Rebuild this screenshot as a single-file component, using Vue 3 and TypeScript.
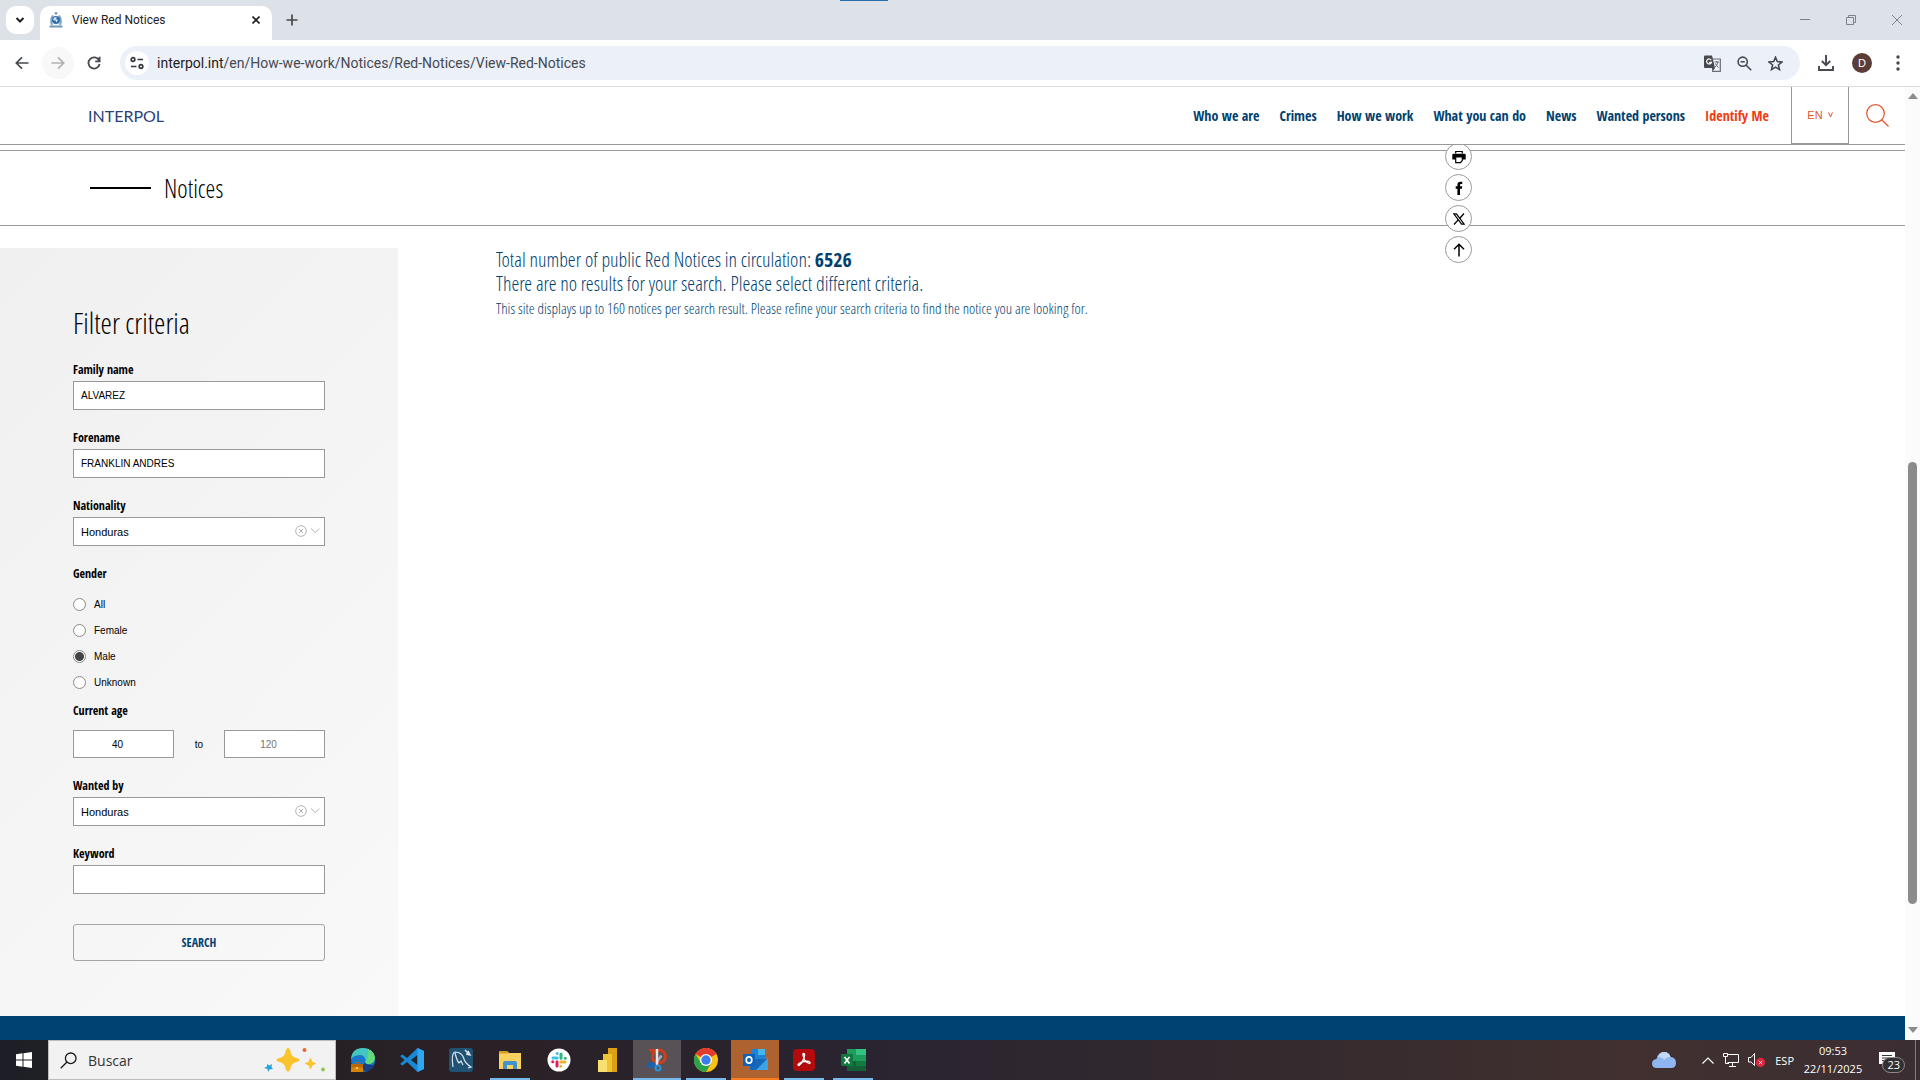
<script setup lang="ts">
import { ref } from 'vue'

interface NavItem {
  label: string
  accent?: boolean
}

const navItems: NavItem[] = [
  { label: 'Who we are' },
  { label: 'Crimes' },
  { label: 'How we work' },
  { label: 'What you can do' },
  { label: 'News' },
  { label: 'Wanted persons' },
  { label: 'Identify Me', accent: true },
]

const genders: string[] = ['All', 'Female', 'Male', 'Unknown']

const familyName = ref<string>('ALVAREZ')
const forename = ref<string>('FRANKLIN ANDRES')
const nationality = ref<string>('Honduras')
const gender = ref<string>('Male')
const ageMin = ref<string>('40')
const ageMax = ref<string>('')
const wantedBy = ref<string>('Honduras')
const keyword = ref<string>('')
const total = ref<number>(6526)
</script>

<template>
  <div class="screen">
    <div class="tabstrip">
      <button class="tab-search" aria-label="Search tabs">
        <svg width="10" height="10" viewBox="0 0 10 10"><path d="M1.5 3l3.500 3.500L8.500 3" fill="none" stroke="#1f2023" stroke-width="2" /></svg>
      </button>
      <div class="tab">
        <svg class="favicon" width="16" height="16" viewBox="0 0 16 16">
          <path d="M8 0v3M6.500 1.200h3" stroke="#5c88b4" stroke-width="1" />
          <path d="M5 3.500Q2 8 4 13M11 3.500Q14 8 12 13" fill="none" stroke="#7ea2c4" stroke-width="2" />
          <circle cx="8" cy="8" r="4" fill="#2d6ca8" />
          <path d="M6 5.500l3-.5-1 2 2 1-1.500 2.500-1-2L5 8z" fill="#d5e4f2" />
          <path d="M1.500 13.500h13v2h-13z" fill="#6f96bb" />
        </svg>
        <span class="tab-title">View Red Notices</span>
        <button class="icon-btn" aria-label="Close tab">
          <svg width="8" height="8" viewBox="0 0 8 8"><path d="M.5.5l7 7M7.500.5l-7 7" stroke="#1f2023" stroke-width="1.600" /></svg>
        </button>
      </div>
      <button class="icon-btn new-tab" aria-label="New tab">
        <svg width="12" height="12" viewBox="0 0 12 12"><path d="M6 .5v11M.5 6h11" stroke="#44474c" stroke-width="1.700" /></svg>
      </button>
      <div class="loader"></div>
      <div class="window-controls">
        <button class="icon-btn" aria-label="Minimize"><svg width="10" height="10" viewBox="0 0 10 10"><path d="M0 4.500h10" stroke="#7e828a" /></svg></button>
        <button class="icon-btn" aria-label="Restore"><svg width="10" height="10" viewBox="0 0 10 10"><path d="M.5 2.500h7v7h-7zM2.500 2.500v-2h7v7h-2" fill="none" stroke="#7e828a" /></svg></button>
        <button class="icon-btn" aria-label="Close"><svg width="10" height="10" viewBox="0 0 10 10"><path d="M0 0l10 10M10 0L0 10" stroke="#7e828a" /></svg></button>
      </div>
    </div>

    <div class="toolbar">
      <button class="tool" aria-label="Back"><svg width="14" height="14" viewBox="0 0 14 14"><path d="M13.500 7H1.500M7 1.300L1.300 7 7 12.700" fill="none" stroke="#46494e" stroke-width="1.700" /></svg></button>
      <button class="tool tool-off" aria-label="Forward"><svg width="14" height="14" viewBox="0 0 14 14"><path d="M.5 7h12M7 1.300L12.700 7 7 12.700" fill="none" stroke="#b0b1b3" stroke-width="1.700" /></svg></button>
      <button class="tool" aria-label="Reload"><svg width="14" height="14" viewBox="0 0 14 14"><path d="M12 4.200A5.600 5.600 0 1 0 12.600 8M12.600.8v4.500H8.200" fill="none" stroke="#46494e" stroke-width="1.800" /></svg></button>
      <div class="omnibox">
        <button class="site-info" aria-label="Site information">
          <svg width="14" height="14" viewBox="0 0 14 14"><g fill="none" stroke="#34373b" stroke-width="1.700"><circle cx="3" cy="3.500" r="1.800" /><path d="M7.500 3.500H13M1 10.500h5.500" /><circle cx="11" cy="10.500" r="1.800" /></g></svg>
        </button>
        <span class="url"><span class="host">interpol.int</span>/en/How-we-work/Notices/Red-Notices/View-Red-Notices</span>
        <button class="icon-btn" aria-label="Translate">
          <svg width="17" height="17" viewBox="0 0 17 17"><path d="M6 4h10.300v12.300H8" fill="none" stroke="#6b6e73" stroke-width="1.200" /><path d="M1 .5h7l3 12.500H1q-1 0-1-1V1.500Q0 .5 1 .5z" fill="#46494e" /><path d="M8 13l3 0-2.500 3.500z" fill="#46494e" /><path d="M7.300 5.200A2.500 2.500 0 1 0 7.500 7.300H5.200" fill="none" stroke="#fff" stroke-width="1.200" /><path d="M10.500 7h4.500M12.700 6v1M14 7q-.5 3-3 5M11.500 8.500q1 2.500 3 4" fill="none" stroke="#6b6e73" /></svg>
        </button>
        <button class="icon-btn" aria-label="Zoom">
          <svg width="15" height="15" viewBox="0 0 15 15"><g fill="none" stroke="#46494e" stroke-width="1.600"><circle cx="5.700" cy="5.700" r="4.600" /><path d="M9 9l5.200 5.200M3.600 5.700h4.200" /></g></svg>
        </button>
        <button class="icon-btn" aria-label="Bookmark">
          <svg width="15" height="15" viewBox="0 0 15 15"><path d="M7.500 1.300l1.800 4.300 4.700.4-3.600 3 1.100 4.600-4-2.500-4 2.500 1.100-4.600L1 6l4.700-.4z" fill="none" stroke="#46494e" stroke-width="1.600" /></svg>
        </button>
      </div>
      <div class="toolbar-end">
        <button class="icon-btn" aria-label="Downloads"><svg width="16" height="16" viewBox="0 0 16 16"><path d="M8 0v10M3.800 6L8 10.200 12.200 6M1 11v4h14v-4" fill="none" stroke="#46494e" stroke-width="1.900" /></svg></button>
        <button class="avatar" aria-label="Profile">D</button>
        <button class="icon-btn" aria-label="Menu"><svg width="4" height="16" viewBox="0 0 4 16"><g fill="#46494e"><circle cx="2" cy="2" r="1.700" /><circle cx="2" cy="8" r="1.700" /><circle cx="2" cy="14" r="1.700" /></g></svg></button>
      </div>
    </div>

    <div class="viewport">
      <div class="page">
        <header class="site-header">
          <a class="logo" href="#">INTERPOL</a>
          <nav class="nav">
            <a v-for="item in navItems" :key="item.label" href="#" :class="{ accent: item.accent }">{{ item.label }}</a>
          </nav>
          <button class="lang">EN <svg width="5" height="6" viewBox="0 0 5 6"><path d="M.5.5l2 4.500 2-4.500" fill="none" stroke="#e0562b" /></svg></button>
          <button class="icon-btn site-search" aria-label="Search">
            <svg width="23" height="23" viewBox="0 0 23 23"><g fill="none" stroke="#e0562b" stroke-width="1.200"><circle cx="9.500" cy="9.500" r="8.800" /><path d="M15.500 15.500l7 7" /></g></svg>
          </button>
        </header>

        <div class="section-bar">
          <span class="dash"></span>
          <h2>Notices</h2>
          <div class="share">
            <button aria-label="Print"><svg width="14" height="14" viewBox="0 0 14 14"><path d="M3.700 3.500v-2h6.600v2" fill="none" stroke="#000" stroke-width="1.200" /><path d="M1.500 3.700h11q1.200 0 1.200 1.200V9.500H.3V4.900q0-1.200 1.200-1.200z" /><path d="M3.700 7h6.600v3.500L8.500 12.600H3.700z" fill="#fff" stroke="#000" stroke-width="1.200" /></svg></button>
            <button aria-label="Facebook"><svg width="14" height="14" viewBox="0 0 14 14"><path d="M5.400 14V7.700H3.700V5.200h1.700V3.700Q5.400.7 8.400.7h1.800v2.400H9q-1 0-1 1v1.100h2.200l-.3 2.500H8V14z" /></svg></button>
            <button aria-label="X"><svg width="12" height="12" viewBox="0 0 12 12"><path d="M.8.8h2.600l7.800 10.400H8.600z" fill="#fff" stroke="#000" stroke-width="1.200" /><path d="M11 .5L6.800 5.200M5.200 6.900L1 11.500" stroke="#000" stroke-width="1.300" /></svg></button>
            <button aria-label="Back to top"><svg width="14" height="14" viewBox="0 0 14 14"><path d="M7 13.500V1.500M2 6.300l5-5 5 5" fill="none" stroke="#000" stroke-width="1.500" /></svg></button>
          </div>
        </div>

        <main class="content">
          <form class="filters" @submit.prevent>
            <h1>Filter criteria</h1>
            <div class="field">
              <label for="family">Family name</label>
              <input id="family" v-model="familyName" type="text" />
            </div>
            <div class="field">
              <label for="forename">Forename</label>
              <input id="forename" v-model="forename" type="text" />
            </div>
            <div class="field">
              <label for="nationality">Nationality</label>
              <div class="select">
                <select id="nationality" v-model="nationality"><option>Honduras</option></select>
                <svg class="select-icons" width="26" height="12" viewBox="0 0 26 12"><g fill="none" stroke="#b4b4b4"><circle cx="6" cy="6" r="5.300" /><path d="M4 4l4 4M8 4L4 8M16 3.500l4.200 4 4.200-4" /></g></svg>
              </div>
            </div>
            <fieldset>
              <legend>Gender</legend>
              <label v-for="g in genders" :key="g" class="radio">
                <input v-model="gender" type="radio" name="gender" :value="g" />{{ g }}
              </label>
            </fieldset>
            <div class="field age">
              <label for="age-min">Current age</label>
              <div class="range">
                <input id="age-min" v-model="ageMin" type="text" inputmode="numeric" />
                <label for="age-max" class="to">to</label>
                <input id="age-max" v-model="ageMax" type="text" inputmode="numeric" placeholder="120" />
              </div>
            </div>
            <div class="field">
              <label for="wanted">Wanted by</label>
              <div class="select">
                <select id="wanted" v-model="wantedBy"><option>Honduras</option></select>
                <svg class="select-icons" width="26" height="12" viewBox="0 0 26 12"><g fill="none" stroke="#b4b4b4"><circle cx="6" cy="6" r="5.300" /><path d="M4 4l4 4M8 4L4 8M16 3.500l4.200 4 4.200-4" /></g></svg>
              </div>
            </div>
            <div class="field">
              <label for="keyword">Keyword</label>
              <input id="keyword" v-model="keyword" type="text" />
            </div>
            <button class="submit" type="submit">SEARCH</button>
          </form>

          <section class="results">
            <p>Total number of public Red Notices in circulation: <strong>{{ total }}</strong></p>
            <p>There are no results for your search. Please select different criteria.</p>
            <p class="hint">This site displays up to 160 notices per search result. Please refine your search criteria to find the notice you are looking for.</p>
          </section>
        </main>
        <footer class="site-footer"></footer>
      </div>
      <div class="scrollbar">
        <svg width="10" height="6" viewBox="0 0 10 6"><path d="M0 6l5-6 5 6z" fill="#8b8b8b" /></svg>
        <div class="track"><div class="thumb"></div></div>
        <svg width="10" height="6" viewBox="0 0 10 6"><path d="M0 0l5 6 5-6z" fill="#8b8b8b" /></svg>
      </div>
    </div>

    <div class="taskbar">
      <button class="start" aria-label="Start"><svg width="16" height="16" viewBox="0 0 16 16"><path d="M0 2.200L6.500 1.300v6.200H0zM7.500 1.200L16 0v7.500H7.500zM0 8.500h6.500v6.200L0 13.800zM7.500 8.500H16V16l-8.500-1.200z" fill="#fff" /></svg></button>
      <label class="finder">
        <svg width="17" height="17" viewBox="0 0 17 17"><g fill="none" stroke="#1b1b1b" stroke-width="1.300"><circle cx="10.700" cy="6.300" r="5.300" /><path d="M7 10L.7 16.300" /></g></svg>
        <input type="text" placeholder="Buscar" aria-label="Buscar" />
        <svg width="62" height="26" viewBox="0 0 62 26">
          <path d="M24 1q2 0 3 5.500 1 3 4 4 4.500 1 4.500 2.500T31 15.500q-3 1-4 4Q26 24.500 24 24.500t-3-5q-1-3-4-4-4.500-1-4.500-2.500t4.500-2.500q3-1 4-4Q22 1 24 1z" fill="#fcc42c" />
          <path d="M46.500 11q1 0 1.500 3 .5 1 2.500 1.500 1.500.3 1.500 1t-1.500 1Q48.500 18 48 19q-.5 3-1.500 3T45 19q-.5-1-2.500-1.500-1.500-.3-1.500-1t1.500-1Q44.500 15 45 14q.5-3 1.500-3z" fill="#fcc42c" />
          <path d="M3 17l2.500 1.500L8 17l-.5 3 1.500 2-3 .3L4 25l-.5-3L0 21l3-1.500z" fill="#2aa4de" />
          <circle cx="40.500" cy="3" r="2" fill="#e8683c" /><circle cx="59" cy="22.500" r="2" fill="#8fc65b" />
        </svg>
      </label>
      <div class="apps">
        <button aria-label="Edge"><svg width="24" height="24" viewBox="0 0 24 24"><circle cx="12" cy="12" r="12" fill="#1976c9" /><path d="M0 11Q1 0 12 0q11 .5 12 10-1 6-7 6-4-1-2.500-4Q14 8 10 7 3 7 0 11z" fill="#43c6c0" /><path d="M17 1q6 3 7 9-1 6-7 6-2 0-2.500-1 4-6 2.500-14z" fill="#65da78" /><path d="M14 15q4 3 9 1.500-3 6-8 7.500-7-5-1-9z" fill="#173f85" /><path d="M0 16h12v8H0z" fill="#d58309" /><path d="M0 16h12v3.500H0z" fill="#b96806" /><path d="M4 14.500h4V16" fill="none" stroke="#b96806" /><path d="M5 19h2v2H5z" fill="#ffd366" /></svg></button>
        <button aria-label="Visual Studio Code"><svg width="24" height="24" viewBox="0 0 24 24"><path d="M17.500 0L24 3v18l-6.500 3L7 14l-4.500 3.500L0 16l4.500-4L0 8l2.500-1.500L7 10z" fill="#1789d6" /><path d="M17.500 7v10L11 12z" fill="#262229" /><path d="M17.500 0L24 3v18l-6.500 3z" fill="#30a7f2" /></svg></button>
        <button aria-label="MySQL Workbench"><svg width="24" height="24" viewBox="0 0 24 24"><rect width="24" height="24" rx="3" fill="#215274" /><path d="M4 19Q2 5 6 4q7 0 9 7 1 4 7 8l-3 1M6 5q2 8 4 10l2-2 2 4" fill="none" stroke="#d5e4ee" stroke-width="1.200" /><path d="M16 2l5 5M19 3l2 4-4-1" fill="none" stroke="#d5e4ee" stroke-width="1.500" /></svg></button>
        <button class="open" aria-label="File Explorer"><svg width="22" height="20" viewBox="0 0 22 20"><path d="M0 1h8l2 2h12v16H0z" fill="#fbd15f" /><path d="M0 1h8l1.500 2.500H0z" fill="#d89b1e" /><path d="M4 19v-6q0-2 2-2h10q2 0 2 2v6h-4v-4H8v4z" fill="#3f94cf" /></svg></button>
        <button aria-label="Slack"><svg width="24" height="24" viewBox="0 0 24 24"><circle cx="12" cy="12" r="11.500" fill="#fff" /><g fill="none" stroke-width="3" stroke-linecap="round"><path d="M10.200 5.500v.1M6 10h4.200" stroke="#36c5f0" /><path d="M14 6v4.200M18.300 10.200h-.1" stroke="#2eb67d" /><path d="M13.800 14H18M13.800 18.300v-.1" stroke="#ecb22e" /><path d="M10 13.800V18M5.700 13.800h.1" stroke="#e01e5a" /></g></svg></button>
        <button aria-label="Power BI"><svg width="20" height="24" viewBox="0 0 20 24"><path d="M10 0h9v24h-9z" fill="#dca017" /><path d="M5 6h9v18H5z" fill="#efc431" /><path d="M0 12h9v12H0z" fill="#f8df6e" /></svg></button>
        <button class="open active" aria-label="Snipping Tool"><svg width="22" height="24" viewBox="0 0 22 24"><ellipse cx="13" cy="8.500" rx="6.500" ry="6.500" fill="none" stroke="#c8401f" stroke-width="3" /><path d="M2 1h8L7 6z" fill="#c8401f" /><path d="M15.500 7.500l-5 7" stroke="#a9aeb3" stroke-width="2.500" /><path d="M11 1v16" stroke="#e4e7e9" stroke-width="2.500" /><ellipse cx="5" cy="17" rx="4.500" ry="3" fill="#1f61a8" /><circle cx="12" cy="20" r="2.500" fill="none" stroke="#2a90d8" stroke-width="2.200" /></svg></button>
        <button class="open" aria-label="Chrome"><svg width="24" height="24" viewBox="0 0 24 24"><circle cx="12" cy="12" r="12" fill="#fbc116" /><path d="M12 12L1.600 6A12 12 0 0 1 22.400 6z" fill="#e33b2e" /><path d="M12 12v0L6.800 15 1.600 6A12 12 0 0 0 12 24l5.200-9z" fill="#2ba24c" /><circle cx="12" cy="12" r="6" fill="#fff" /><circle cx="12" cy="12" r="4.700" fill="#3b7ded" /></svg></button>
        <button class="open alert" aria-label="Outlook"><svg width="25" height="24" viewBox="0 0 25 24"><path d="M8 1h14v14H8z" fill="#1d83d4" /><path d="M15 1h7v6h-7z" fill="#45b5ef" /><path d="M7 11h18v11H7z" fill="#1769b8" /><path d="M25 10v12H13z" fill="#3ba4e8" /><rect y="6" width="12" height="12" rx="1" fill="#0e62bb" /><ellipse cx="6" cy="12" rx="2.800" ry="3.200" fill="none" stroke="#fff" stroke-width="1.700" /></svg></button>
        <button class="open" aria-label="Acrobat"><svg width="22" height="22" viewBox="0 0 22 22"><rect width="22" height="22" rx="4" fill="#b30b0b" /><path d="M10.500 4.500q2 0 .5 4.500-1.500 5-5 7.500-2 0 0-2 4-3 10-2 2.500 1.500 0 2Q11 13 10 6q-.3-1.500.5-1.500z" fill="none" stroke="#fff" stroke-width="1.300" /></svg></button>
        <button class="open" aria-label="Excel"><svg width="25" height="22" viewBox="0 0 25 22"><path d="M6 0h19v22H6z" fill="#1d9c5b" /><path d="M15 0h10v6H15z" fill="#33c481" /><path d="M6 12h19v10H6z" fill="#165f38" /><path d="M15 12h10v5H15z" fill="#107c41" /><rect y="5" width="12" height="12" rx="1" fill="#0f7a40" /><path d="M3.500 8l5 6.500M8.500 8l-5 6.500" stroke="#fff" stroke-width="1.700" /></svg></button>
      </div>
      <div class="tray">
        <svg class="cloud" width="24" height="16" viewBox="0 0 24 16"><path d="M5 16Q0 16 0 11.500 0 7.500 4.500 7 6 0 12 0q5 0 6.500 5Q24 5.500 24 11q0 5-5 5z" fill="#8fb6f0" /><path d="M6 5q2-5 6-5 5 0 6.500 5-5 0-6 3Q10 4.500 6 5z" fill="#c3d8f7" /></svg>
        <svg class="caret" width="12" height="7" viewBox="0 0 12 7"><path d="M.5 6.500L6 1l5.500 5.500" fill="none" stroke="#fff" stroke-width="1.200" /></svg>
        <svg width="16" height="14" viewBox="0 0 16 14"><path d="M4.500 1.500h11v8h-11M9.500 10v3M6 13.500h7M.5.5h4v3h-4zM2.500 4v6.500H6" fill="none" stroke="#fff" /></svg>
        <svg width="18" height="16" viewBox="0 0 18 16"><path d="M.5 5.500H3l3.500-4v12L3 10H.5z" fill="none" stroke="#fff" /><circle cx="12.500" cy="10.500" r="4.700" fill="#d9263c" /><path d="M10.800 8.800l3.400 3.400M14.200 8.800l-3.400 3.400" stroke="#fff" /></svg>
        <span class="ime">ESP</span>
        <time class="clock"><span>09:53</span><span>22/11/2025</span></time>
        <button class="notify" aria-label="Notifications">
          <svg width="16" height="16" viewBox="0 0 16 16"><path d="M0 0h16v12H7l-3 3.500V12H0z" fill="#fff" /><path d="M3 3.500h10M3 6h10M3 8.500h6" stroke="#3d3033" /></svg>
          <span class="badge">23</span>
        </button>
      </div>
    </div>
  </div>
</template>

<style>
body {
  margin: 0;
  background: #fff;
}
</style>

<style scoped>
.screen {
  --cond: "Open Sans Condensed", "Liberation Sans Narrow", "Open Sans", sans-serif;
  --cond-light: "Open Sans Condensed Light", "Open Sans Condensed", "Liberation Sans Narrow", sans-serif;
  --line: #999;
  --blue: #00416f;
  display: flex;
  flex-direction: column;
  min-height: 100vh;
  font-family: "Liberation Sans", Arial, sans-serif;
  font-size: 11px;
  color: #000;
}
.screen * {
  box-sizing: border-box;
}
button {
  padding: 0;
  border: 0;
  background: none;
  font: inherit;
  color: inherit;
}
svg {
  display: block;
  flex: none;
}
a {
  text-decoration: none;
}
h1, h2, p {
  margin: 0;
  font-weight: 300;
}
.icon-btn {
  display: flex;
  align-items: center;
  justify-content: center;
}

/* browser frame */
.tabstrip {
  position: relative;
  display: flex;
  align-items: flex-start;
  height: 40px;
  padding: 6px 18px 0 6px;
  background: #dde1e8;
}
.tab-search {
  display: flex;
  align-items: center;
  justify-content: center;
  width: 28px;
  height: 28px;
  margin-right: 6px;
  border-radius: 10px;
  background: #fff;
}
.tab {
  display: flex;
  align-items: center;
  gap: 8px;
  width: 232px;
  height: 34px;
  padding: 0 12px 6px 8px;
  border-radius: 10px 10px 0 0;
  background: #fff;
}
.tab-title {
  flex: 1;
  font-family: Roboto, sans-serif;
  font-size: 12px;
  color: #1f2023;
}
.new-tab {
  height: 28px;
  margin-left: 14px;
}
.loader {
  position: absolute;
  top: 0;
  left: 840px;
  width: 48px;
  height: 1px;
  background: #2c6da8;
}
.window-controls {
  display: flex;
  gap: 36px;
  height: 28px;
  margin-left: auto;
}
.toolbar {
  display: flex;
  align-items: center;
  height: 47px;
  padding: 0 20px 0 6px;
  border-bottom: 1px solid #dcdcdc;
  background: #fff;
}
.tool {
  display: flex;
  align-items: center;
  justify-content: center;
  width: 32px;
  height: 32px;
  margin-right: 4px;
  border-radius: 16px;
}
.tool-off {
  background: #f8f8f8;
}
.omnibox {
  display: flex;
  flex: 1;
  align-items: center;
  gap: 16px;
  height: 34px;
  margin-left: 6px;
  padding: 0 17px 0 5px;
  border-radius: 17px;
  background: #ebf0f9;
}
.site-info {
  display: flex;
  align-items: center;
  justify-content: center;
  width: 24px;
  height: 24px;
  border-radius: 12px;
  background: #fff;
}
.url {
  flex: 1;
  margin-left: -8px;
  font-family: Roboto, sans-serif;
  font-size: 14px;
  color: #46494e;
}
.host {
  color: #1f2023;
}
.toolbar-end {
  display: flex;
  align-items: center;
  gap: 18px;
  margin-left: 18px;
}
.avatar {
  width: 20px;
  height: 20px;
  border-radius: 10px;
  background: #5a3d36;
  font-size: 11px;
  color: #fff;
}
.toolbar-end .icon-btn:last-child {
  margin-left: 6px;
}

/* web page */
.viewport {
  display: flex;
  flex: 1;
}
.page {
  display: flex;
  flex: 1;
  flex-direction: column;
}
.site-header {
  position: relative;
  z-index: 2;
  display: flex;
  align-items: stretch;
  height: 58px;
  padding-left: 88px;
  border-bottom: 1px solid var(--line);
  background: #fff;
}
.logo {
  margin: auto auto auto 0;
  font-family: "Lato", sans-serif;
  font-size: 16px;
  color: #2a4178;
}
.nav {
  display: flex;
  align-items: center;
  gap: 20px;
  margin-right: 22px;
  font-family: var(--cond);
  font-size: 14px;
  font-weight: 700;
}
.nav a {
  color: var(--blue);
}
.nav .accent {
  color: #f03c0f;
}
.lang {
  display: flex;
  align-items: center;
  justify-content: center;
  gap: 5px;
  width: 58px;
  height: 57px;
  border: solid var(--line);
  border-width: 0 1px 1px;
  color: #e0562b;
}
.site-search {
  width: 56px;
}
.section-bar {
  position: relative;
  display: flex;
  align-items: center;
  height: 76px;
  margin-top: 5px;
  padding-left: 90px;
  border: solid var(--line);
  border-width: 1px 0;
}
.dash {
  width: 61px;
  height: 2px;
  margin-right: 13px;
  background: #000;
}
h2 {
  font-family: var(--cond-light);
  font-size: 25px;
  line-height: 30px;
}
.share {
  position: absolute;
  top: -8px;
  right: 433px;
  display: flex;
  flex-direction: column;
  gap: 4px;
}
.share button {
  display: flex;
  align-items: center;
  justify-content: center;
  width: 27px;
  height: 27px;
  border: 1px solid var(--line);
  border-radius: 50%;
  background: #fff;
}
.content {
  display: flex;
  align-items: flex-start;
  margin-top: 22px;
}
.filters {
  width: 398px;
  padding: 56px 73px 55px;
  background: linear-gradient(135deg, #f0f0f0, #f9f9f9);
}
h1 {
  margin-bottom: 20px;
  font-family: var(--cond-light);
  font-size: 29px;
  line-height: 38px;
}
.field {
  display: flex;
  flex-direction: column;
  margin-bottom: 20px;
}
.field > label,
legend {
  margin-bottom: 4px;
  padding: 0;
  font-family: var(--cond);
  font-size: 12px;
  font-weight: 700;
  line-height: 15px;
}
.field input,
select {
  width: 100%;
  height: 29px;
  padding: 0 7px;
  border: 1px solid var(--line);
  border-radius: 0;
  background: #fff;
  font-family: inherit;
  font-size: 10px;
  color: #000;
  appearance: none;
}
select {
  font-size: 11px;
}
.select {
  position: relative;
}
.select-icons {
  position: absolute;
  top: 8px;
  right: 4px;
}
fieldset {
  display: flex;
  flex-direction: column;
  margin: 0 0 8px;
  padding: 0;
  border: 0;
}
legend {
  margin-bottom: 10px;
}
.radio {
  display: flex;
  align-items: center;
  gap: 8px;
  height: 26px;
  font-size: 10px;
}
.radio input {
  width: 13px;
  height: 13px;
  margin: 0;
  border: 1px solid #8a8a8a;
  border-radius: 50%;
  background: #fff;
  appearance: none;
}
.radio input:checked {
  background: radial-gradient(circle, #444 4px, #fff 5px);
}
.range {
  display: flex;
  align-items: center;
  justify-content: space-between;
  margin-top: 8px;
}
.range input {
  width: 101px;
  height: 28px;
  padding: 0 20px 0 8px;
  text-align: center;
}
.to {
  font-size: 10px;
}
.submit {
  width: 100%;
  height: 37px;
  margin-top: 10px;
  border: 1px solid #a6a6a6;
  border-radius: 3px;
  font-family: var(--cond);
  font-size: 12px;
  font-weight: 700;
  color: var(--blue);
}
.results {
  flex: 1;
  padding-left: 98px;
  font-family: var(--cond-light);
  font-size: 20px;
  line-height: 24px;
  color: var(--blue);
}
.results strong {
  font-family: var(--cond);
  font-weight: 700;
}
.results .hint {
  font-size: 15px;
}
.site-footer {
  flex: 1;
  min-height: 24px;
  background: #004271;
}
.scrollbar {
  display: flex;
  flex-direction: column;
  align-items: center;
  width: 15px;
  padding: 6px 0 7px;
  background: #fbfbfb;
}
.track {
  display: flex;
  flex: 1;
  flex-direction: column;
  align-items: center;
}
.track::before {
  content: "";
  flex: 363;
}
.track::after {
  content: "";
  flex: 123;
}
.thumb {
  flex: 442;
  width: 9px;
  border-radius: 5px;
  background: #8b8b8b;
}

/* taskbar */
.taskbar {
  display: flex;
  height: 40px;
  background: linear-gradient(90deg, #1e1f26, #2a2126 25%, #2a2431 45%, #332a2e 65%, #41302f 85%, #3b2e33);
  font-family: "Open Sans", sans-serif;
  color: #fff;
}
.start {
  display: flex;
  align-items: center;
  justify-content: center;
  width: 48px;
}
.finder {
  display: flex;
  align-items: center;
  width: 288px;
  padding: 0 9px 0 11px;
  border: 1px solid #bdbdbd;
  background: #f2f2f2;
}
.finder input {
  flex: 1;
  min-width: 0;
  padding: 0 0 0 11px;
  border: 0;
  background: none;
  font-family: inherit;
  font-size: 14px;
}
.finder input::placeholder {
  color: #333;
}
.apps {
  display: flex;
  gap: 1px;
  margin-left: 3px;
}
.apps button {
  display: flex;
  align-items: center;
  justify-content: center;
  width: 48px;
}
.apps .open {
  background: linear-gradient(#76b9ed, #76b9ed) center bottom / 40px 2px no-repeat;
}
.apps .active {
  background: linear-gradient(#76b9ed, #76b9ed) center bottom / 48px 2px no-repeat, #585156;
}
.apps .alert {
  background: linear-gradient(#ff7a1a, #ff7a1a) center bottom / 48px 2px no-repeat, #ad622f;
}
.tray {
  display: flex;
  align-items: center;
  gap: 9px;
  margin-left: auto;
  margin-right: 4px;
  padding-right: 10px;
  border-right: 1px solid #877c7d;
}
.cloud {
  margin-right: 17px;
}
.clock {
  display: flex;
  flex-direction: column;
  width: 60px;
  font-size: 11px;
  line-height: 18px;
  text-align: center;
}
.notify {
  position: relative;
  width: 26px;
  height: 24px;
  margin-left: 7px;
}
.badge {
  position: absolute;
  right: 0;
  bottom: -1px;
  padding: 0 4px;
  border: 1px solid #8d8586;
  border-radius: 9px;
  background: #333034;
  font-size: 11px;
  line-height: 14px;
}
</style>
